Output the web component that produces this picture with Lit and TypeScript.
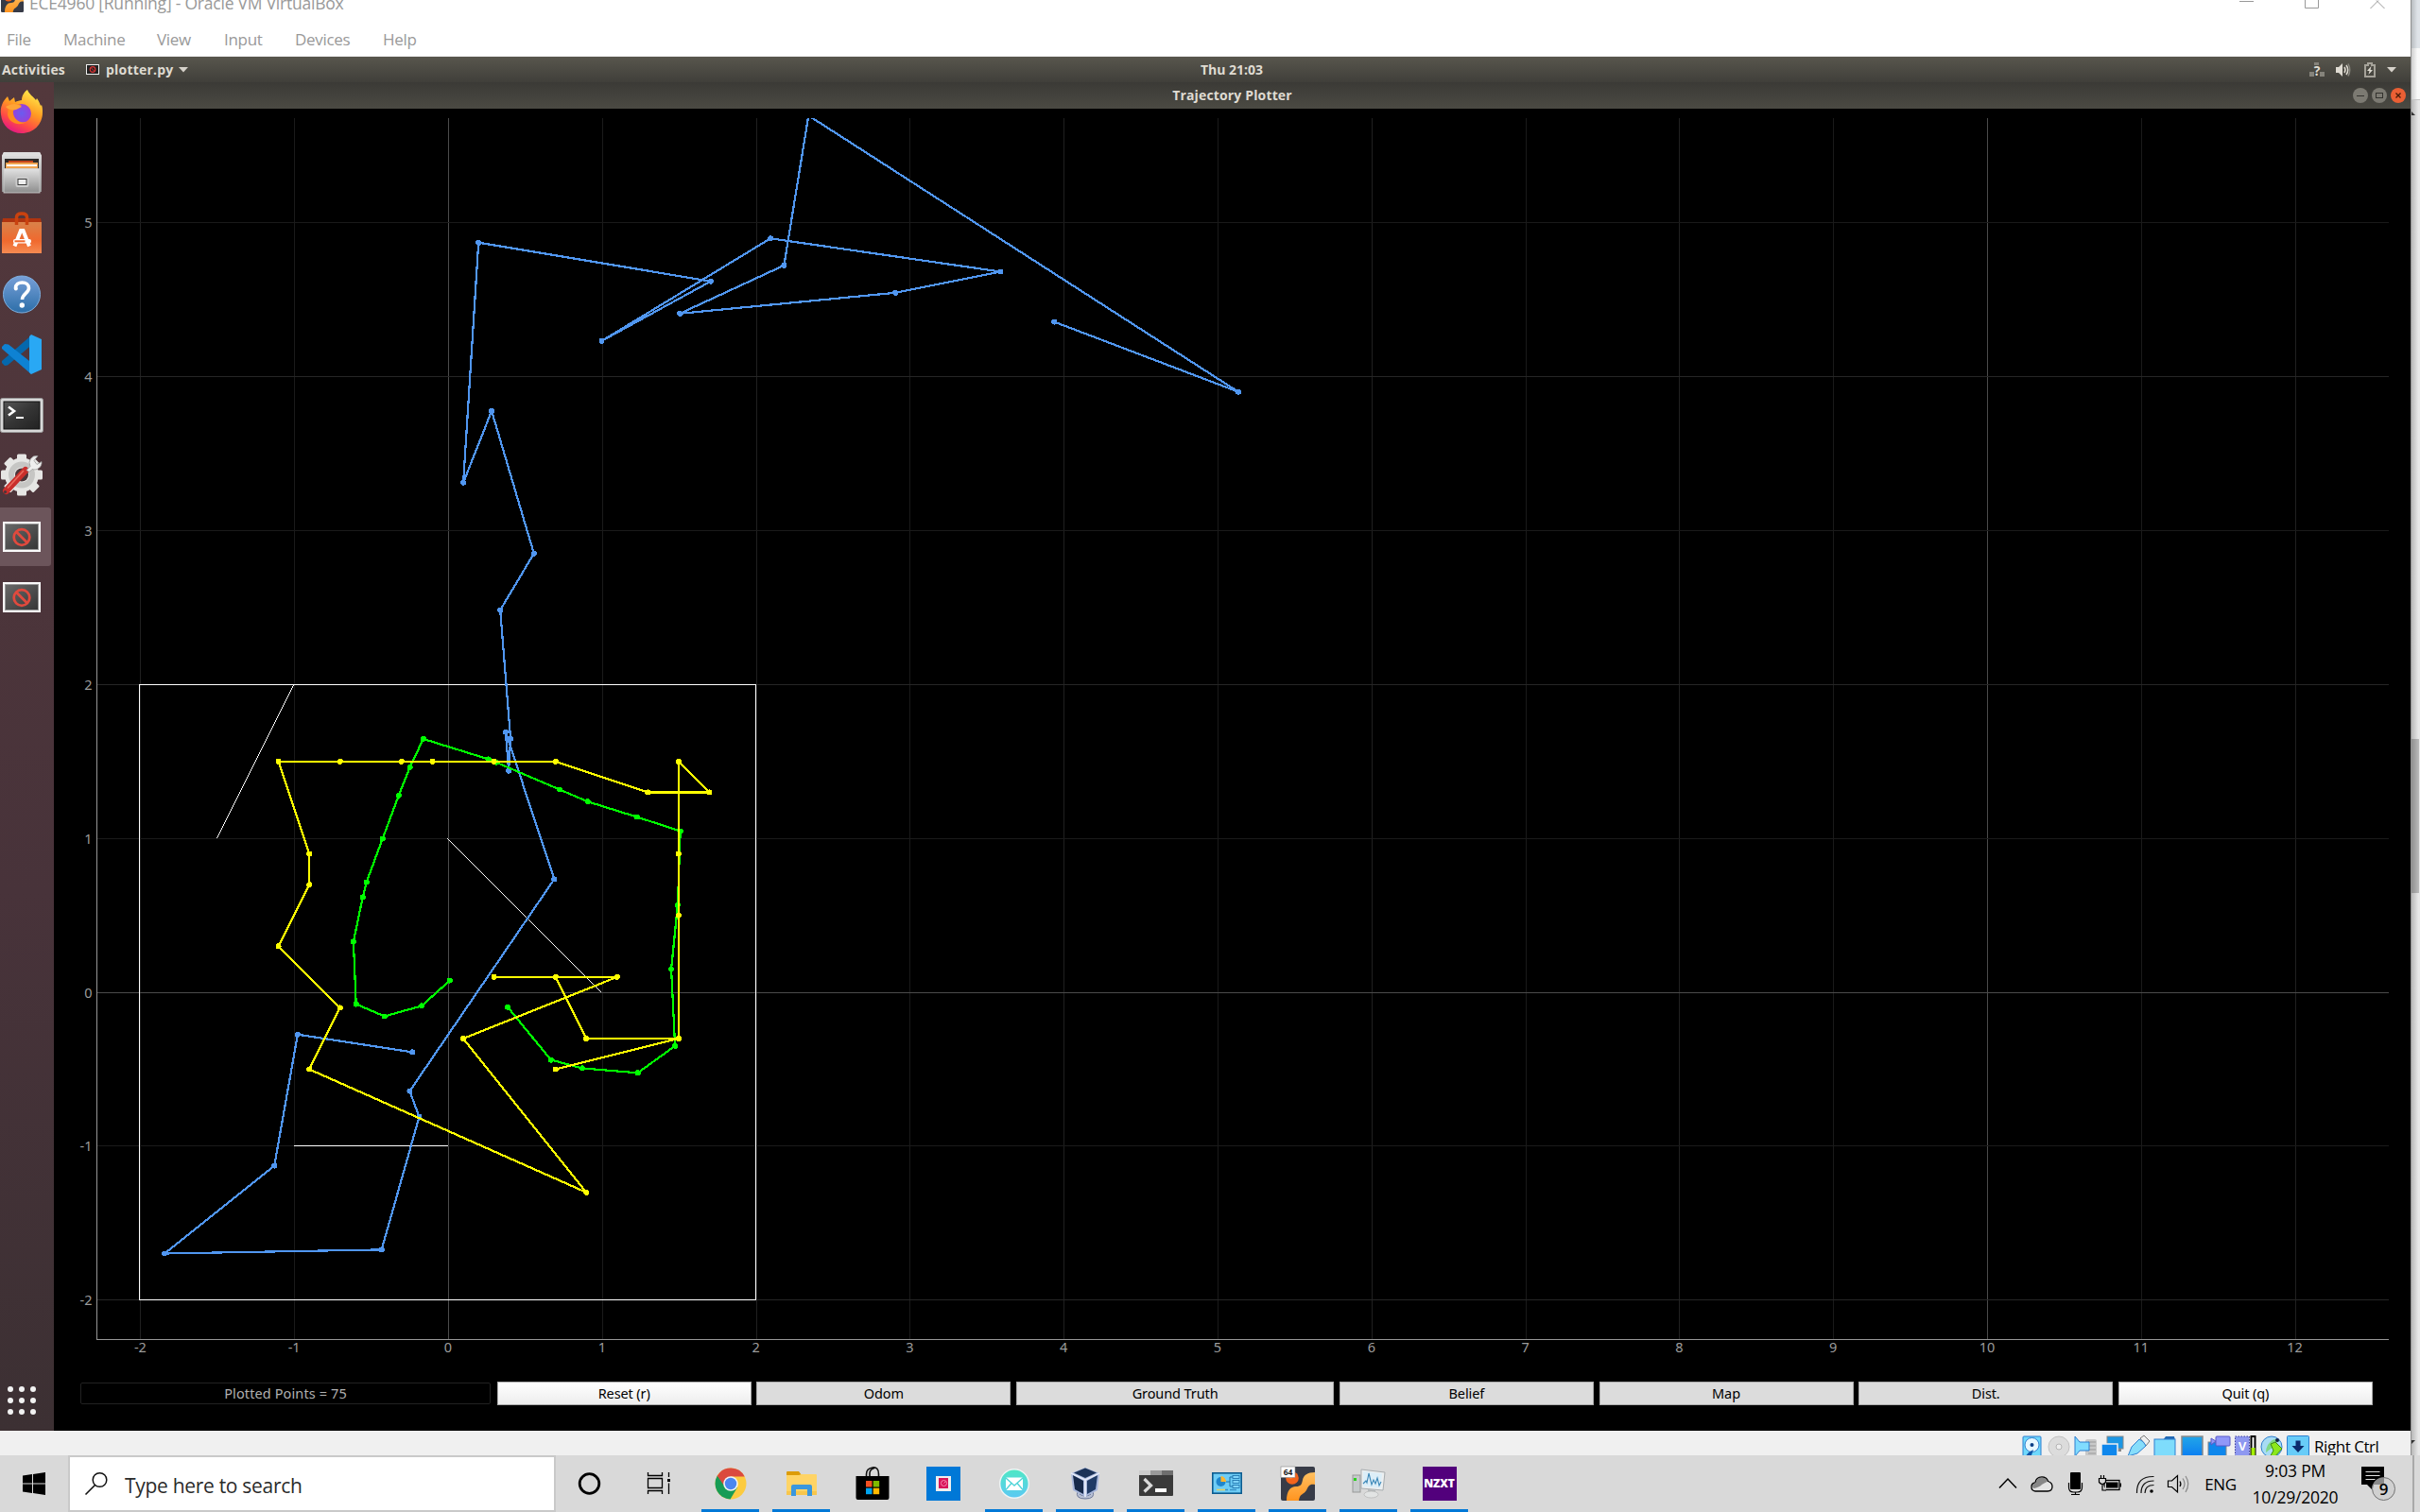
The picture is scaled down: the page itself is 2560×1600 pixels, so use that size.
import { LitElement, html, svg, css, SVGTemplateResult, TemplateResult } from "lit";
import { customElement } from "lit/decorators.js";

type Pt = [number, number];

const icon = (w: number, h: number, body: SVGTemplateResult): TemplateResult =>
  html`<svg class="icon" width=${w} height=${h} viewBox="0 0 ${w} ${h}">${body}</svg>`;

/* ---------- plot geometry ---------- */
const X0 = 474.5;
const Y0 = 1050.1;
const UX = 162.8;
const UY = 162.85;
const px = (x: number) => X0 + x * UX;
const py = (y: number) => Y0 - y * UY;
const snap = (v: number) => Math.floor(v) + 0.5;

const odom: Pt[] = [
  [-0.237, -0.389], [-0.982, -0.274], [-1.134, -1.127], [-1.847, -1.697], [-0.437, -1.672],
  [-0.192, -0.809], [-0.254, -0.642], [0.685, 0.735], [0.369, 1.692], [0.389, 1.44],
  [0.401, 1.648], [0.334, 2.484], [0.553, 2.852], [0.278, 3.778], [0.094, 3.312],
  [0.193, 4.872], [1.702, 4.62], [0.993, 4.233], [2.09, 4.899], [3.585, 4.683],
  [2.901, 4.546], [1.501, 4.411], [2.178, 4.724], [2.337, 5.697], [5.13, 3.902], [3.934, 4.357],
];
const truth: Pt[] = [
  [0.384, -0.096], [0.666, -0.439], [0.869, -0.493], [1.23, -0.523], [1.472, -0.348],
  [1.447, 0.151], [1.489, 0.567], [1.506, 1.047], [1.224, 1.14], [0.905, 1.239],
  [0.722, 1.318], [0.31, 1.494], [0.259, 1.515], [-0.164, 1.647], [-0.251, 1.463],
  [-0.324, 1.28], [-0.429, 0.998], [-0.533, 0.716], [-0.558, 0.617], [-0.618, 0.329],
  [-0.601, -0.077], [-0.415, -0.156], [-0.175, -0.088], [0.008, 0.077],
];
const belief: Pt[] = [
  [0.3, 0.1], [0.7, 0.1], [1.1, 0.1], [0.1, -0.3], [0.9, -1.3], [-0.9, -0.5], [-0.7, -0.1],
  [-1.1, 0.3], [-0.9, 0.7], [-0.9, 0.9], [-1.1, 1.5], [-0.7, 1.5], [-0.3, 1.5], [-0.1, 1.5],
  [0.3, 1.5], [0.7, 1.5], [1.3, 1.3], [1.7, 1.3], [1.5, 1.5], [1.5, 0.9], [1.5, 0.5],
  [1.5, -0.3], [0.7, -0.5], [1.5, -0.3], [0.9, -0.3], [0.7, 0.1],
];
const walls: [Pt, Pt][] = [
  [[-1.5, 1], [-1, 2]],
  [[0, 1], [1, 0]],
  [[-1, -1], [0, -1]],
];

const series = (pts: Pt[], color: string, dx = 0) => svg`
  <polyline points=${pts.map(([x, y]) => `${(px(x) + dx).toFixed(1)},${py(y).toFixed(1)}`).join(" ")}
    fill="none" stroke=${color} stroke-width="2.2" stroke-linejoin="bevel"></polyline>
  ${pts.map(([x, y]) => svg`<circle cx=${(px(x) + dx).toFixed(1)} cy=${py(y).toFixed(1)} r="3" fill=${color}></circle>`)}`;

@customElement("trajectory-plot")
export class TrajectoryPlot extends LitElement {
  static styles = css`
    :host { display: block; height: 1335px; }
    svg { display: block; }
    .tick { font: 14.500px "Noto Sans", sans-serif; fill: #9c9c9c; }
    .crisp { shape-rendering: crispEdges; }
  `;
  render() {
    const xs = Array.from({ length: 15 }, (_, i) => i - 2);
    const ys = Array.from({ length: 8 }, (_, i) => i - 2);
    return html`<svg width="2493" height="1335" viewBox="57 115 2493 1335">
      <defs><clipPath id="area"><rect x="102" y="125" width="2425" height="1293"></rect></clipPath></defs>
      <g class="crisp">
        ${xs.map((x) => svg`<line x1=${snap(px(x))} x2=${snap(px(x))} y1="125" y2="1417"
          stroke=${x % 10 === 0 ? "#4b4b4b" : x % 2 === 0 ? "#202020" : "#1a1a1a"}></line>`)}
        ${ys.map((y) => svg`<line y1=${snap(py(y))} y2=${snap(py(y))} x1="103" x2="2527"
          stroke=${y === 0 ? "#4b4b4b" : y % 2 === 0 ? "#262626" : "#1a1a1a"}></line>`)}
        <path d="M102.5 125V1417.5H2527" fill="none" stroke="#969696"></path>
        <rect x="147.5" y="724.5" width="652" height="651" fill="none" stroke="#fff"></rect>
      </g>
      <g clip-path="url(#area)" class="crisp">
        ${walls.map(([a, b]) => svg`<line x1=${px(a[0]) - 1} y1=${py(a[1])} x2=${px(b[0]) - 1} y2=${py(b[1])} stroke="#fff"></line>`)}
        ${series(odom, "#5096f0", 0.3)}
        ${series(truth, "#00ff00")}
        ${series(belief, "#ffff00", -0.8)}
      </g>
      ${xs.map((x) => svg`<text class="tick" text-anchor="middle" x=${px(x) - 0.5} y="1431">${x}</text>`)}
      ${ys.map((y) => svg`<text class="tick" text-anchor="end" x="97.5" y=${py(y) + 5.5}>${y}</text>`)}
    </svg>`;
  }
}

/* ---------- launcher icons ---------- */
const firefox = icon(46, 46, svg`
  <defs>
    <linearGradient id="fx" x1="0.8" y1="0" x2="0.3" y2="1"><stop offset="0" stop-color="#fff44f"/><stop offset=".45" stop-color="#ff9a22"/><stop offset=".75" stop-color="#ff4b45"/><stop offset="1" stop-color="#e31587"/></linearGradient>
    <radialGradient id="fp"><stop offset="0" stop-color="#6a5cf0"/><stop offset="1" stop-color="#9a3fd8"/></radialGradient>
  </defs>
  <path d="M1 26C0 18 3 12 8 7l2 5 5-4 1 5c2-1 5-2 7-2 0-5 3-9 6-11 2 5 6 7 9 11l1-2c2 3 3 5 4 8l1-1c1 3 1 5 1 8 0 13-10 22-22 22S2 38 1 26z" fill="url(#fx)"/>
  <circle cx="23" cy="25" r="10" fill="url(#fp)"/>
  <path d="M9 18c5-4 10-4 14-1-4 0-6 2-9 5-1 8 6 14 14 12-8 5-19 1-20-8z" fill="#ff8a1e"/>
  <path d="M6 18c7-4 12-4 17 0l-6 3c-4 1-8 0-11-3z" fill="#ffa436"/>`);
const files = icon(44, 46, svg`
  <defs><linearGradient id="fc" x2="0" y2="1"><stop stop-color="#e2e2e2"/><stop offset="1" stop-color="#8d8d8d"/></linearGradient></defs>
  <path d="M1 6l2-4h38l2 4v38H1z" fill="url(#fc)"/><path d="M1 6l2-4h38l2 4z" fill="#dedede"/>
  <rect x="4" y="9" width="36" height="11" fill="#2e2a28"/>
  <rect x="8" y="11" width="26" height="3" fill="#c4451a"/><rect x="5" y="13" width="34" height="7" fill="#f0a450"/><rect x="6" y="15" width="32" height="2" fill="#fff"/>
  <rect x="3" y="19.500" width="38" height="25.500" fill="url(#fc)" stroke="#d0d0d0" stroke-width=".8"/>
  <rect x="15.500" y="28" width="14" height="11" rx="2" fill="#ccc"/><rect x="18" y="30.500" width="9" height="6" fill="#eee" stroke="#3d3d3d"/>`);
const software = icon(44, 46, svg`
  <defs><linearGradient id="bg" x2="0" y2="1"><stop stop-color="#d9824a"/><stop offset=".6" stop-color="#f0692e"/><stop offset="1" stop-color="#f58a52"/></linearGradient></defs>
  <path d="M2 7h40l1 5H1z" fill="#b0340f"/><rect x="1" y="11" width="42" height="33" fill="url(#bg)"/>
  <path d="M16.500 14V6q0-4 5.500-4t5.500 4v8" fill="none" stroke="#c9420f" stroke-width="3.500"/>
  <path d="M14.500 36.500L21 20h2.500L30 36.500" fill="none" stroke="#fff" stroke-width="4"/>
  <rect x="13" y="29" width="19" height="4.500" rx="2" fill="#fff"/><rect x="14.500" y="30.300" width="11" height="2" fill="#f0692e"/>`);
const help = icon(42, 42, svg`
  <defs><linearGradient id="hp" x2="0" y2="1"><stop stop-color="#78a0d8"/><stop offset="1" stop-color="#2c6ea8"/></linearGradient></defs>
  <circle cx="21" cy="21.500" r="19.500" fill="url(#hp)" stroke="#7fb0e0"/>
  <path d="M14.500 15c0-4 3-6 7-6s7 2.200 7 6c0 5-7 6-7 12" fill="none" stroke="#fff" stroke-width="3.600"/><circle cx="14.800" cy="15.500" r="2" fill="#fff"/><circle cx="21.300" cy="33" r="2.700" fill="#fff"/>`);
const vscode = icon(44, 44, svg`
  <path d="M1 31l3 3 3-.5 25-21V2L1 29z" fill="#0568ad"/><path d="M1 14l3-3 4 .5 24 19V43L1 16z" fill="#0e82d3"/>
  <path d="M32 1l11 5v32l-11 5-2-2V3z" fill="#29a8f4"/>`);
const terminal = icon(46, 38, svg`
  <defs><linearGradient id="tm" x2="1" y2="1"><stop stop-color="#555"/><stop offset=".5" stop-color="#353535"/><stop offset="1" stop-color="#222"/></linearGradient></defs>
  <g transform="translate(0 1)"><rect x=".5" y=".5" width="45" height="36" rx="2" fill="#d8d8d8" stroke="#999"/><rect x="4" y="4" width="38" height="29" fill="url(#tm)" stroke="#111"/>
  <path d="M9 9.500l6 4.500-6 4.500" fill="none" stroke="#fff" stroke-width="2.600"/><rect x="17" y="20" width="8" height="2" fill="#fff"/></g>`);
const gear = icon(46, 46, svg`
  <g transform="translate(0 -1.500)"><g fill="#e6e6e4"><circle cx="23" cy="23" r="18"/>
  ${[0, 45, 90, 135].map((a) => svg`<rect x="18" y="1" width="10" height="44" rx="1.500" transform="rotate(${a} 23 23)"/>`)}</g>
  <circle cx="23" cy="23" r="11" fill="none" stroke="#c6c6c4" stroke-width="6"/><circle cx="23" cy="23" r="7" fill="#4b3539"/>
  <path d="M6.500 40L27 18" stroke="#c92f2c" stroke-width="7" stroke-linecap="round"/><path d="M8 37L25 18.500" stroke="#ea6a5c" stroke-width="1.600"/>
  <circle cx="5.500" cy="41" r="1.600" fill="#4b3539"/>
  <path d="M28 18l4-4a7.500 7.500 0 0 1 8-11l-4 5 3 4 5-3a7.500 7.500 0 0 1-10 8l-3 3z" fill="#eee" stroke="#999" stroke-width=".8"/></g>`);
const blocked = icon(40, 32, svg`
  <defs><linearGradient id="bl" x2="1" y2="1"><stop stop-color="#6b6b6b"/><stop offset="1" stop-color="#333"/></linearGradient></defs>
  <rect x="1" y="1" width="38" height="30" fill="url(#bl)" stroke="#fafafa" stroke-width="2"/><rect x="2.500" y="2.500" width="35" height="27" fill="none" stroke="#999"/>
  <circle cx="20" cy="16.500" r="8.300" fill="none" stroke="#e04a3e" stroke-width="2.800"/><path d="M14.500 11l11 11" stroke="#e04a3e" stroke-width="2.800"/>`);

/* ---------- taskbar icons ---------- */
const cortana = icon(26, 26, svg`<circle cx="13.500" cy="13" r="10.300" fill="none" stroke="#000" stroke-width="2.800"/>`);
const taskview = icon(26, 24, svg`<path d="M.5 0v3.500h15V0M.5 6.500h15v10H.5zM.5 23v-3.500h15V23M22.500 0v5M22.500 11.500V23" fill="none" stroke="#000" stroke-width="1.300"/><rect x="21" y="7" width="3" height="3"/>`);
const chrome = icon(34, 34, svg`
  <circle cx="17" cy="17" r="16.500" fill="#fccb3f"/>
  <path d="M17 17L2.700 8.800A16.500 16.500 0 0 0 16.500 33.500L24 21z" fill="#179c55"/>
  <path d="M2.700 8.800A16.500 16.500 0 0 1 31.700 9.500H17l-7.500 9z" fill="#db4a3e"/>
  <circle cx="17" cy="17" r="7.800" fill="#f3f3f3"/><circle cx="17" cy="17" r="6.200" fill="#4a86f0"/>`);
const explorer = icon(32, 28, svg`
  <path d="M0 2q0-1 1-1h12l3 4H0z" fill="#dd9c08"/><path d="M0 5h13l3-1h15q1 0 1 1v21H0z" fill="#ffd466"/><path d="M0 22h32v4H0z" fill="#f8c64c"/>
  <path d="M5 27V17q0-2 2-2h18q2 0 2 2v10h-5v-7H10v7z" fill="#3b97dd"/>`);
const store = icon(36, 36, svg`
  <path d="M11.500 11V8q0-6 6.500-7t6.500 7v3M15 11V7q0-4 5-5.500" fill="none" stroke="#111" stroke-width="1.600"/>
  <path d="M.5 10h35v23q0 2-2 2h-31q-2 0-2-2z"/><rect x="11" y="15" width="6.500" height="6.500" fill="#f25022"/><rect x="18.700" y="15" width="6.500" height="6.500" fill="#7fba00"/><rect x="11" y="22.700" width="6.500" height="6.500" fill="#00a4ef"/><rect x="18.700" y="22.700" width="6.500" height="6.500" fill="#ffb900"/>`);
const recorder = icon(36, 36, svg`<rect width="36" height="36" fill="#0078d7"/><rect x="10" y="10" width="16" height="16" fill="#eee"/><rect x="13" y="12" width="10" height="11" fill="#d8135a"/><circle cx="18.500" cy="17.500" r="3" fill="none" stroke="#f58ab0"/><path d="M18.500 17.500l2-2" stroke="#f58ab0"/>`);
const mail = icon(34, 34, svg`
  <defs><linearGradient id="ml" x2="0" y2="1"><stop stop-color="#4fe8c4"/><stop offset="1" stop-color="#5cc8f4"/></linearGradient></defs>
  <circle cx="17" cy="17" r="15.300" fill="url(#ml)" stroke="#f0f4f4" stroke-width="1.400"/><rect x="8" y="10.500" width="18" height="13.500" rx="1" fill="#fff"/><path d="M8 11l9 8 9-8M8 23.500l6-7M26 23.500l-6-7" fill="none" stroke="#50d4d8" stroke-width="1.400"/>`);
const vbox = icon(32, 36, svg`
  <path d="M8 26q-3 8 8 8t8-8" fill="#b8c0d4" stroke="#6c7898"/><path d="M10 29q6 4 12 0" fill="none" stroke="#5c6888"/>
  <path d="M16 1l15 6-2 18-13 7L3 25 1 7z" fill="#a9b8dc"/><path d="M16 1.500l12 5L16 12 4 6.500z" fill="#1b3257"/>
  <path d="M3 9l11 6v14L5 24z" fill="#16294a"/><path d="M29 9l-11 6v14l9-5z" fill="#203b66"/><path d="M1 7l15 7 15-7M16 14v18" fill="none" stroke="#e4eaf8" stroke-width="1.800"/>`);
const winterm = icon(36, 28, svg`<path d="M0 4h36v22q0 1-1 1H1q-1 0-1-1z" fill="#3a3a3a"/><rect width="12" height="5" fill="#ccc"/><rect x="12" width="12" height="5" fill="#999"/><rect x="24" width="12" height="5" fill="#6e6e6e"/><path d="M5.500 9l7 7-7 6.500" fill="none" stroke="#dadada" stroke-width="3.200"/><rect x="17" y="19" width="12" height="4" fill="#fff"/>`);
const panel = icon(32, 24, svg`<rect x=".8" y=".8" width="30.400" height="21.400" fill="#6ecdf6" stroke="#0c5c90" stroke-width="1.600"/><circle cx="9.500" cy="10" r="5" fill="#1f86cc"/><path d="M9.500 10V4a6 6 0 0 1 5.500 6z" fill="#ffb52e"/><path d="M15 10h4V5h3M19 10v5h3" fill="none" stroke="#1b6ea8"/><rect x="22" y="3.500" width="7" height="3" fill="#7fd4fa" stroke="#1b6ea8" stroke-width=".8"/><rect x="22" y="8.500" width="7" height="3" fill="#7fd4fa" stroke="#1b6ea8" stroke-width=".8"/><rect x="22" y="13.500" width="7" height="3" fill="#7fd4fa" stroke="#1b6ea8" stroke-width=".8"/><path d="M5 18.500h9" stroke="#e8d060" stroke-width="1.500"/><path d="M14 18.500h3M19 18.500h7" stroke="#3b93c8" stroke-width="1.300"/>`);
const xming = (w: number) => html`<svg class="icon" width=${w} height=${w} viewBox="0 0 36 36">
  <defs><linearGradient id="xm" x2="0" y2="1"><stop stop-color="#ffc060"/><stop offset="1" stop-color="#ff9420"/></linearGradient></defs>
  <rect width="36" height="36" rx="2" fill="#373b47"/><circle cx="12" cy="12" r="6.800" fill="#f4641c"/><circle cx="10.500" cy="10" r="2.500" fill="#ff9a50"/>
  <path d="M6 36c0-10 4-15 10-15 5 0 6-2 7-7 1-5 5-8 13-8v13c-6-1-7 2-9 6-3 5-7 3-8 11z" fill="url(#xm)"/>
  ${w > 30 ? svg`<rect width="15" height="11.500" fill="#fff" stroke="#888" stroke-width=".6"/><text class="badge64" x="7.500" y="9.300" text-anchor="middle">64</text>` : ""}</svg>`;
const perfmon = icon(36, 32, svg`
  <rect x="1" y="7" width="8" height="18" fill="#c6cacc" stroke="#999"/><rect x="2" y="10" width="3" height="3" fill="#2bd21e"/>
  <path d="M10 1l25 3-2 19-23-2z" fill="#eceff0" stroke="#a8adb0"/><path d="M12 3l20 2.500-1.500 15L12 19z" fill="#dceef8"/>
  <path d="M12 16l3-3 1 2 2-10 3 12 2-5 2 4 2-6 2 8 2-4" fill="none" stroke="#3c88b8" stroke-width="1.100"/>
  <path d="M17 22l8 1v3h-8z" fill="#b5b9bb"/><ellipse cx="20.500" cy="27.500" rx="7.500" ry="3.500" fill="#e2e4e4" stroke="#b4b4b4" stroke-width=".7"/>`);

const chevron = icon(24, 24, svg`<path d="M3 16.500L12 7l9 9.500" fill="none" stroke="#000" stroke-width="1.500"/>`);
const cloud = icon(24, 24, svg`<path d="M5 20q-4-.5-4-4.500T5 11q1-6 7-6 5 0 6.500 4.500Q23 11 23 15q0 5-5 5z" fill="#e4e4e4" stroke="#000" stroke-width="1.300"/><path d="M1.800 15q.4-3.500 3.700-4 1-5.500 6.500-5.500 4.500 0 6 4.300-2 1-6 3.200-3 3-9 4z" fill="#888"/>`);
const mic = icon(24, 24, svg`<rect x="6" y="0" width="11" height="18" rx="1"/><path d="M4.500 11v5q0 5 5 5h4q5 0 5-5v-5M11.500 21v3M7 23.500h9" fill="none" stroke="#000" stroke-width="1.200"/>`);
const battery = icon(24, 24, svg`<rect x="6" y="8.500" width="16" height="10" fill="none" stroke="#000" stroke-width="1.300"/><rect x="8" y="10.500" width="12.500" height="6"/><rect x="22.500" y="11.500" width="1.500" height="4"/><path d="M.5 6.500h7v4q-3.500 4-7 0zM2.500 6V3M5.500 6V3M4 12v7h4" fill="#d9d9d9" stroke="#000" stroke-width="1.200"/>`);
const wifi = icon(24, 24, svg`<g fill="none" stroke="#111" stroke-width="1.200"><path d="M4.500 22Q4 4 22.500 4.500"/><path d="M9 22Q9 9 22.500 9"/><path d="M13 22Q13 13.500 22.500 13.500"/></g><circle cx="20" cy="20" r="1.800"/>`);
const speaker = icon(24, 24, svg`<path d="M1.500 9h4l6-5.500v17.500l-6-5.500h-4z" fill="none" stroke="#000" stroke-width="1.200"/><path d="M14 9.500q1.800 2.800 0 5.500" fill="none" stroke="#000" stroke-width="1.200"/><path d="M17 6.500q4 5.500 0 11.500M20 4q5.500 8 0 17" fill="none" stroke="#888" stroke-width="1.200"/>`);
const notify = html`<svg class="icon" width="38" height="38" viewBox="0 0 38 38">
  <path d="M0 1h24v19H12l-1 5-5-5H0z"/><path d="M4.500 6.500h15M4.500 10.500h15M4.500 14.500h10" stroke="#e4e4e4" stroke-width="1.200"/>
  <circle cx="23.500" cy="24.500" r="12" fill="#d0d0d0" stroke="#666" stroke-width=".9"/><path d="M12.500 20A12 12 0 0 1 24 12.700V20z" fill="#8a8a8a"/>
  <text class="count" x="23.500" y="30.500" text-anchor="middle">9</text></svg>`;

/* ---------- VM status icons ---------- */
const B = "#2e7fd0";
const statusIcons: TemplateResult[] = [
  icon(24, 24, svg`<rect x="2" y="1" width="19" height="24" rx="1" fill="#6fd8fb" stroke=${B}/><circle cx="11.500" cy="10" r="7.500" fill="#e8f8ff" stroke=${B}/><circle cx="11.500" cy="10" r="2" fill="#0b3f86"/><path d="M3 24l5-6 5-3-2 6z" fill="#0d55a8"/>`),
  icon(24, 24, svg`<circle cx="12" cy="12" r="11" fill="#dcdcdc" stroke="#c2c2c2"/><circle cx="12" cy="12" r="3" fill="#efefef" stroke="#b5b5b5"/>`),
  icon(24, 24, svg`<rect x="12" y="4" width="12" height="18" rx="2" fill="#c8c8c8"/><path d="M15 7h8M15 11h8M15 15h8M15 19h8" stroke="#999"/><path d="M1 1l5 6h10v9H6l-5 6z" fill="#80dcff" stroke=${B}/>`),
  icon(24, 24, svg`<rect x="7" y="1" width="17" height="13" fill="#1c97e4" stroke="#888"/><path d="M18 14h4v3h-4z" fill="#888"/><rect x="1" y="9" width="17" height="14" fill="#0f87ec" stroke="#eee" stroke-width="1.500"/>`),
  icon(24, 24, svg`<path d="M14 3l4-3 6 6-4 5z" fill="#eee" stroke="#777"/><path d="M1 22l4-10 8-8q5 2 7 7l-9 8z" fill="#86ddfa" stroke=${B}/>`),
  icon(24, 24, svg`<path d="M10 5l3-4h9l1 4z" fill="#2268b4"/><rect x="1" y="4" width="22" height="20" fill="#7edcfc" stroke=${B}/>`),
  icon(24, 24, svg`<defs><linearGradient id="mo" x2="0" y2="1"><stop stop-color="#22a6e8"/><stop offset="1" stop-color="#0a7cf2"/></linearGradient></defs><rect x="1" y="1" width="22" height="22" fill="url(#mo)" stroke="#8a8a8a" stroke-width="1.500"/>`),
  icon(24, 24, svg`<rect x="1" y="7" width="19" height="16" fill="#0f87ec" stroke="#888"/><rect x="9" y="1" width="15" height="10" rx="1" fill="#9097f8" stroke="#5858c8"/><path d="M9 6L4 3v7z" fill="#9097f8" stroke="#5858c8"/>`),
  html`<svg class="icon" width="24" height="24" viewBox="0 0 24 24"><rect x="1.500" y="1" width="15" height="24" fill="#8e98f0" stroke="#3a3a9c" stroke-dasharray="1.500 1.500"/><text class="vchip" x="9" y="16" text-anchor="middle">V</text><rect x="17.500" y="0" width="6" height="24" fill="#000"/><rect x="19.500" y="2" width="2" height="11" fill="#fff"/><rect x="18.500" y="13" width="4" height="11" fill="#a6f000"/></svg>`,
  icon(24, 24, svg`<circle cx="12" cy="12" r="11" fill="#a8dcf4" stroke=${B}/><path d="M6 18q0-10 9-14l4 1-4 6z" fill="#7fd884"/><circle cx="18" cy="5" r="2" fill="#124"/><path d="M11 9l5-2 7 7-8 9h-5l4-7z" fill="#8ce81c" stroke="#3e8a10"/>`),
  icon(24, 24, svg`<rect x=".5" y=".5" width="23" height="24" rx="1" fill="#68ccf8" stroke=${B}/><path d="M9.500 5.500h5V11h4L12 18 5.500 11h4z" fill="#0b2a6c"/>`),
];

const launcher = [firefox, files, software, help, vscode, terminal, gear, blocked, blocked];
const apps: { i: TemplateResult; open: boolean }[] = [
  { i: cortana, open: false }, { i: taskview, open: false }, { i: chrome, open: true },
  { i: explorer, open: true }, { i: store, open: false }, { i: recorder, open: false },
  { i: mail, open: true }, { i: vbox, open: true }, { i: winterm, open: true },
  { i: panel, open: true }, { i: xming(36), open: true }, { i: perfmon, open: true },
  { i: html`<span class="nzxt">NZXT</span>`, open: true },
];
const menus: [string, string][] = [
  ["File", "m1"], ["Machine", "m2"], ["View", "m3"], ["Input", "m4"], ["Devices", "m5"], ["Help", "m6"],
];
const buttons: [string, boolean][] = [
  ["Reset (r)", true], ["Odom", false], ["Ground Truth", false], ["Belief", false],
  ["Map", false], ["Dist.", false], ["Quit (q)", true],
];

@customElement("app-root")
export class AppRoot extends LitElement {
  static styles = css`
    :host { display: block; width: 2560px; height: 1600px; overflow: hidden; background: #fff; font-family: "Open Sans", "Noto Sans", sans-serif; }
    * { box-sizing: border-box; }
    .icon { display: block; flex: none; overflow: visible; }
    .upper { display: flex; height: 1540px; }
    .window { width: 2550px; display: flex; flex-direction: column; }
    .titlebar { height: 16px; display: flex; justify-content: space-between; color: #999; font-size: 17.5px; overflow: hidden; }
    .title { display: flex; gap: 6px; padding-left: 1px; white-space: nowrap; line-height: 24px; letter-spacing: -0.22px; }
    .title .logo { margin-top: -11px; height: 24px; }
    .title .label { margin-top: -9px; }
    .controls { display: flex; padding-right: 27px; gap: 54px; }
    .menubar { height: 44px; display: flex; color: #999; font-size: 17px; line-height: 24px; padding: 14px 0 0 7px; letter-spacing: -0.3px; border-bottom: 1px solid #f0f0f0; }
    .m1 { width: 60px; } .m2 { width: 99px; } .m3 { width: 71px; } .m4 { width: 75px; } .m5 { width: 93px; }
    .topbar { height: 27px; display: grid; grid-template-columns: 1fr auto 1fr; align-items: center; background: linear-gradient(#58564d, #403f3a); color: #dfdbd2; font-weight: 700; font-size: 14px; padding-left: 2px; }
    .left { display: flex; align-items: center; }
    .left .act { width: 89px; letter-spacing: 0.2px; }
    .left .app { margin: 0 6px 0 7px; letter-spacing: 0.2px; }
    .indicators { display: flex; justify-content: flex-end; align-items: center; padding-right: 15px; gap: 12px; }
    .caret { margin-left: -2px; }
    .clock { transform: translateX(27px); }
    .guest { display: flex; flex: 1; }
    .dock { width: 57px; background: linear-gradient(#53383c, #48333a 60%, #3c3033); display: flex; flex-direction: column; justify-content: space-between; }
    .slot { height: 64.25px; display: flex; align-items: center; justify-content: center; width: 46px; }
    .slots { margin-top: -1px; }
    .slot.active { width: 54px; height: 62px; margin: 1px 0; padding-right: 8px; background: #6c555b; border-radius: 0 3px 3px 0; }
    .grid { display: grid; grid-template-columns: repeat(3, 6px); gap: 6px; padding: 0 0 17px 8px; }
    .grid i { width: 6px; height: 6px; border-radius: 50%; background: #f2f2f2; }
    .appwin { flex: 1; background: #000; }
    .apptitle { height: 28px; display: grid; grid-template-columns: 1fr auto 1fr; align-items: center; background: linear-gradient(#3b3a36, #4b4a43); color: #dfdbd2; font-weight: 700; font-size: 14px; letter-spacing: 0.15px; }
    .apptitle .cap { margin-top: -2px; }
    .apptitle .wb { display: flex; justify-content: flex-end; gap: 4px; padding-right: 5px; }
    .buttons { display: flex; justify-content: space-between; align-items: center; margin: 12px 40px 0 28px; height: 25px; font: 14.500px "Noto Sans", sans-serif; letter-spacing: -0.1px; }
    .points { width: 434px; height: 23px; border: 1px solid #222; border-radius: 2px; color: #b0b0b0; text-align: center; line-height: 20px; letter-spacing: 0.12px; margin-right: 1px; }
    .btn { width: 269px; height: 25px; border: 1px solid #aaa; background: #dcdcdc; color: #000; text-align: center; line-height: 23px; }
    .btn.wide { width: 336px; }
    .btn.lit { background: linear-gradient(#fff, #ededed); }
    .status { height: 26px; background: #f0f0f0; display: flex; justify-content: flex-end; padding: 5px 36px 0 0; gap: 4.100px; overflow: hidden; }
    .status .host { font-size: 17px; line-height: 24px; color: #000; letter-spacing: -0.45px; width: 66px; white-space: nowrap; margin-left: 1px; }
    .edge { width: 10px; border-left: 1px solid #909090; display: flex; flex-direction: column; background: linear-gradient(90deg, #b8b8b8, #e8e8e8 80%); }
    .e1 { height: 51px; background: linear-gradient(90deg, #b9bdc1, #dfe3e8 70%); }
    .e2 { height: 55px; background: linear-gradient(90deg, #cfcfcf, #f9f9f9 70%); border-bottom: 1px solid #c4c4c4; }
    .e3 { height: 676px; padding-top: 12px; }
    .thumb { height: 163px; width: 8px; background: linear-gradient(90deg, #8f8f8f, #bbb); }
    .e4 { padding-top: 579px; }
    .taskbar { height: 60px; display: flex; background: #d9d9d9; }
    .start { width: 72px; display: flex; align-items: center; justify-content: center; }
    .search { width: 516px; margin-right: -3px; border: 2px solid #c9c9c9; background: #fff; display: flex; align-items: center; padding-left: 16px; gap: 18px; font-size: 21px; color: #2b2b2b; letter-spacing: -0.3px; }
    .search span { padding-top: 3px; }
    .task { width: 75px; display: flex; flex-direction: column; align-items: center; }
    .task .pic { height: 57px; padding-top: 3px; display: flex; align-items: center; }
    .bar { width: 61px; height: 3px; background: #0078d7; }
    .tray { margin-left: auto; display: flex; align-items: center; }
    .cell { width: 36px; display: flex; justify-content: center; }
    .lang { width: 54px; text-align: center; font-size: 17px; letter-spacing: -0.4px; }
    .time { width: 104px; text-align: center; font-size: 17.5px; line-height: 28px; letter-spacing: -0.2px; white-space: nowrap; }
    .bell { width: 72px; padding-left: 18px; }
    .peek { width: 8px; height: 60px; border-left: 2px solid #a9a9a9; }
    .nzxt { width: 36px; height: 36px; background: #52007c; color: #fff; font: 800 12px/36px "Open Sans", sans-serif; text-align: center; letter-spacing: -0.1px; }
    .badge64 { font: 700 8.500px "Open Sans", sans-serif; fill: #222; }
    .count { font: 600 17px "Open Sans", sans-serif; }
    .vchip { font: 700 13px "Liberation Sans", sans-serif; fill: #fff; }
    .net { font: 700 14px "Open Sans", sans-serif; fill: #dfdbd2; }
  `;

  private windowButton(kind: "min" | "max" | "close") {
    const glyph = {
      min: svg`<path d="M4 8.500h8" stroke="#33322e"/>`,
      max: svg`<rect x="4.500" y="5.500" width="7" height="5" fill="none" stroke="#33322e"/>`,
      close: svg`<path d="M5.500 5.500l5 5M10.500 5.500l-5 5" stroke="#4a1c08" stroke-width="1.400"/>`,
    }[kind];
    return icon(16, 16, svg`<circle cx="8" cy="8" r="8" fill=${kind === "close" ? "#ea5f34" : "#7c7a72"}/>${glyph}`);
  }

  render() {
    return html`
      <div class="upper">
        <div class="window">
          <div class="titlebar">
            <div class="title"><span class="logo">${xming(24)}</span><span class="label">ECE4960 [Running] - Oracle VM VirtualBox</span></div>
            <div class="controls">
              ${icon(15, 16, svg`<path d="M0 1.500h15" stroke="#999"/>`)}
              ${icon(15, 16, svg`<path d="M.5 0v8.500h14V0" fill="none" stroke="#999"/>`)}
              ${icon(16, 16, svg`<path d="M.5 9L9 .5M15.500 9L7 .5" stroke="#999"/>`)}
            </div>
          </div>
          <div class="menubar">${menus.map(([t, c]) => html`<span class=${c}>${t}</span>`)}</div>
          <div class="topbar">
            <div class="left">
              <span class="act">Activities</span>
              ${icon(14, 11, svg`<rect x=".5" y=".5" width="13" height="10" fill="#222" stroke="#eee"/><circle cx="7" cy="5.500" r="2.800" fill="none" stroke="#d33" stroke-width="1.200"/><path d="M5 3.500l4 4" stroke="#d33"/>`)}
              <span class="app">plotter.py</span>
              ${icon(10, 6, svg`<path d="M0 0h10L5 5.500z" fill="#d6d2ca"/>`)}
            </div>
            <span class="clock">Thu 21:03</span>
            <div class="indicators">
              <svg class="icon" width="16" height="16" viewBox="0 0 16 16"><path d="M5 0h5v3H5zM0 10h5v5H0zM11 10h5v5h-5z" fill="#85837b"/><text class="net" x="8" y="14" text-anchor="middle">?</text></svg>
              ${icon(16, 16, svg`<path d="M0 5h3l4-4v14l-4-4H0z" fill="#dfdbd2"/><path d="M9 5q2 3 0 6M11 3q3.500 5 0 10" fill="none" stroke="#dfdbd2" stroke-width="1.500"/><path d="M13 1.500q3.500 6.500 0 13" fill="none" stroke="#85837b" stroke-width="1.500"/>`)}
              ${icon(16, 16, svg`<path d="M3 3h3V1h4v2h3v12H3z" fill="none" stroke="#a5a299" stroke-width="2"/><path d="M9.500 4L5 9h2.500L6.500 13 11 8H8.500z" fill="#dfdbd2"/>`)}
              <span class="caret">${icon(10, 6, svg`<path d="M0 0h10L5 5.500z" fill="#d6d2ca"/>`)}</span>
            </div>
          </div>
          <div class="guest">
            <div class="dock">
              <div class="slots">${launcher.map((l, n) => html`<div class="slot ${n === 7 ? "active" : ""}">${l}</div>`)}</div>
              <div class="grid">${Array.from({ length: 9 }, () => html`<i></i>`)}</div>
            </div>
            <div class="appwin">
              <div class="apptitle">
                <span></span><span class="cap">Trajectory Plotter</span>
                <div class="wb">${this.windowButton("min")}${this.windowButton("max")}${this.windowButton("close")}</div>
              </div>
              <trajectory-plot></trajectory-plot>
              <div class="buttons">
                <div class="points">Plotted Points = 75</div>
                ${buttons.map(([t, lit]) => html`<div class="btn ${lit ? "lit" : ""} ${t === "Ground Truth" ? "wide" : ""}">${t}</div>`)}
              </div>
            </div>
          </div>
          <div class="status">${statusIcons}<span class="host">Right Ctrl</span></div>
        </div>
        <div class="edge">
          <div class="e1"></div><div class="e2"></div>
          <div class="e3">${icon(5, 5, svg`<path d="M0 0l4 4H0z" fill="#333"/>`)}</div>
          <div class="thumb"></div>
          <div class="e4">${icon(5, 5, svg`<path d="M0 0h4L0 4z" fill="#333"/>`)}</div>
        </div>
      </div>
      <div class="taskbar">
        <div class="start">${icon(24, 24, svg`<path d="M0 3.500l10-1.400v9.400H0zM11 2l13-2v11.500H11zM0 12.500h10v9.400L0 20.500zM11 12.500h13V24l-13-2z"/>`)}</div>
        <div class="search">${icon(24, 24, svg`<circle cx="15.500" cy="8" r="7.300" fill="none" stroke="#111" stroke-width="1.500"/><path d="M10.500 13.500L.5 23.500" stroke="#111" stroke-width="1.600"/>`)}<span>Type here to search</span></div>
        ${apps.map((a) => html`<div class="task"><div class="pic">${a.i}</div>${a.open ? html`<div class="bar"></div>` : ""}</div>`)}
        <div class="tray">
          ${[chevron, cloud, mic, battery, wifi, speaker].map((t) => html`<div class="cell">${t}</div>`)}
          <div class="lang">ENG</div>
          <div class="time"><div>9:03 PM</div><div>10/29/2020</div></div>
          <div class="bell">${notify}</div>
          <div class="peek"></div>
        </div>
      </div>`;
  }
}
